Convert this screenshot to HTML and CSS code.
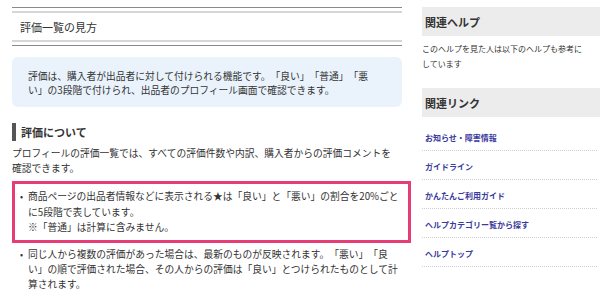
FILE: index.html
```html
<!DOCTYPE html>
<html lang="ja">
<head>
    <meta charset="UTF-8">
    <meta name="viewport" content="width=device-width, initial-scale=1.0">
    <title>評価一覧の見方</title>
    <link rel="stylesheet" href="styles.css">
</head>
<body>
    <div class="page">
        <div class="main">
            <div class="title-box">
                <h1>評価一覧の見方</h1>
            </div>

            <div class="info-box">
                評価は、購入者が出品者に対して付けられる機能です。「良い」「普通」「悪<br>い」の3段階で付けられ、出品者のプロフィール画面で確認できます。
            </div>

            <h2 class="section-title">評価について</h2>
            <p class="lead">プロフィールの評価一覧では、すべての評価件数や内訳、購入者からの評価コメントを<br>確認できます。</p>

            <!-- 強調された項目 -->
            <div class="highlight">
                <ul class="notes">
                    <li>商品ページの出品者情報などに表示される★は「良い」と「悪い」の割合を20%ごと<br>に5段階で表しています。<br>※「普通」は計算に含みません。</li>
                </ul>
            </div>

            <ul class="notes notes-plain">
                <li>同じ人から複数の評価があった場合は、最新のものが反映されます。「悪い」「良<br>い」の順で評価された場合、その人からの評価は「良い」とつけられたものとして計<br>算されます。</li>
            </ul>
        </div>

        <div class="side">
            <h3 class="side-title">関連ヘルプ</h3>
            <p class="side-text">このヘルプを見た人は以下のヘルプも参考に<br>しています</p>

            <h3 class="side-title side-title-links">関連リンク</h3>
            <ul class="side-links">
                <li><a href="#">お知らせ・障害情報</a></li>
                <li><a href="#">ガイドライン</a></li>
                <li><a href="#">かんたんご利用ガイド</a></li>
                <li><a href="#">ヘルプカテゴリー覧から探す</a></li>
                <li><a href="#">ヘルプトップ</a></li>
            </ul>
        </div>
    </div>
</body>
</html>
```

FILE: styles.css
```css
body {
    margin: 0;
    font-family: "Noto Sans CJK JP", "Noto Sans", sans-serif;
    color: #333;
    background-color: #fff;
    overflow: hidden;
    text-spacing-trim: space-all;
}

.page {
    display: flex;
    gap: 20px;
    padding: 7px 0 0 12px;
}

.main {
    width: 390px;
    flex-shrink: 0;
}

.title-box {
    border-top: 1px solid #8a8a8a;
    border-bottom: 1px solid #8a8a8a;
    padding: 3px 0;
}

.title-box h1 {
    margin: 0;
    border-top: 2px solid #d6d6d6;
    border-bottom: 2px solid #d6d6d6;
    padding: 1px 8px 0;
    font-size: 11px;
    font-weight: normal;
    line-height: 26px;
}

.info-box {
    margin-top: 11px;
    background-color: #eaf3fc;
    border-radius: 6px;
    padding: 12px 16px 10px;
    font-size: 9.75px;
    line-height: 14px;
    white-space: nowrap;
}

.section-title {
    margin: 16px 0 0;
    border-left: 4px solid #555;
    padding-left: 5px;
    font-size: 11px;
    font-weight: bold;
    line-height: 18px;
}

.lead {
    margin: 5px 0 0;
    font-size: 9.75px;
    line-height: 15px;
    white-space: nowrap;
}

.highlight {
    margin: 5px -9px 0 0;
    border: 3px solid #e63d76;
    padding: 5px 4px 4px 0;
}

.notes {
    list-style: none;
    margin: 0;
    padding-left: 13px;
    font-size: 9.75px;
    line-height: 15.5px;
    white-space: nowrap;
}

.notes li::before {
    content: "•";
    display: inline-block;
    width: 8px;
    margin-left: -8px;
    font-size: 9px;
}

.notes-plain {
    margin-top: 4px;
    padding-left: 16px;
    line-height: 15px;
}

.side {
    width: 190px;
    flex-shrink: 0;
}

.side-title {
    margin: 0;
    background-color: #ececec;
    padding: 1px 3px 0;
    font-size: 11px;
    font-weight: bold;
    line-height: 28px;
}

.side-title-links {
    margin-top: 17px;
}

.side-text {
    margin: 5px 0 0;
    font-size: 8px;
    line-height: 15px;
}

.side-links {
    list-style: none;
    margin: 5px 0 0;
    padding: 0;
    width: 175px;
}

.side-links li {
    border-bottom: 1px dotted #cfcfcf;
    line-height: 24px;
    padding-left: 3px;
}

.side-links a {
    color: #3a3a9c;
    font-size: 8px;
    font-weight: bold;
    text-decoration: none;
}
```
